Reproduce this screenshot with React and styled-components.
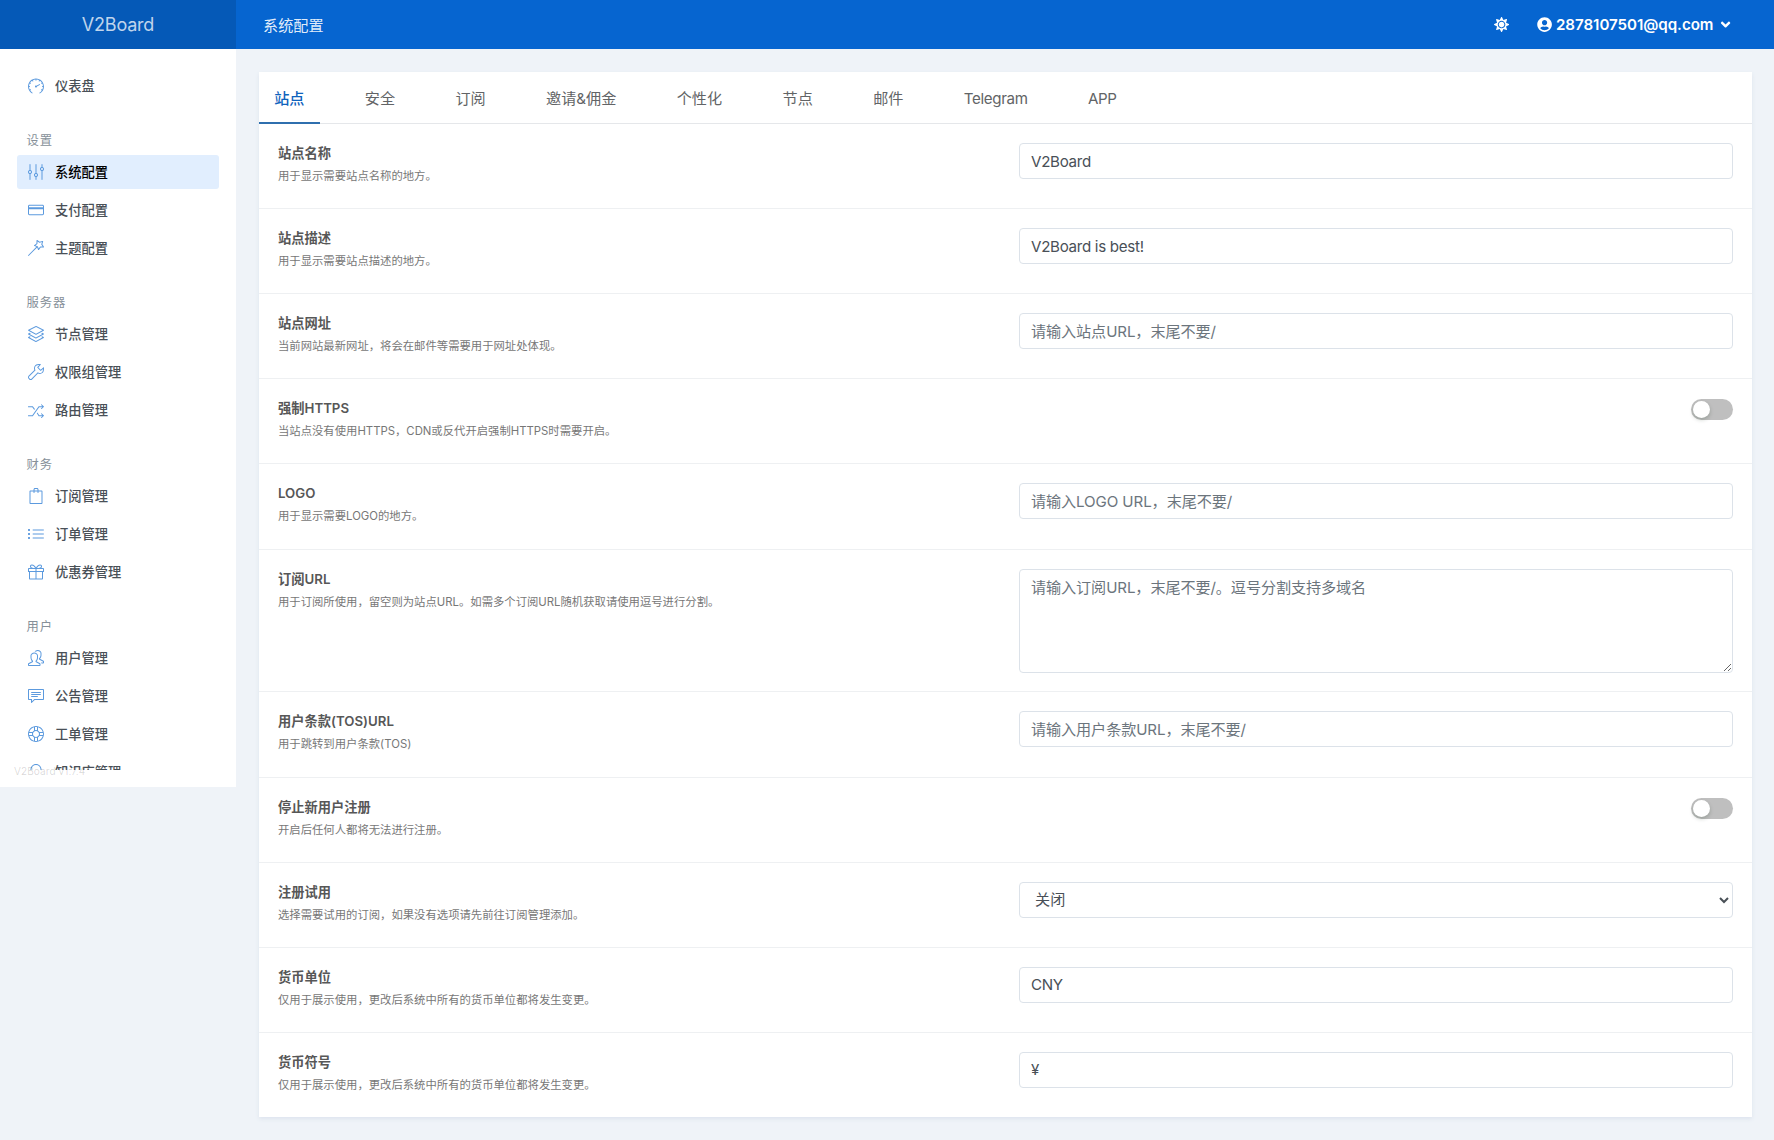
import React from "react";
import styled, { createGlobalStyle } from "styled-components";
import {
  SlSpeedometer,
  SlEqualizer,
  SlCreditCard,
  SlMagicWand,
  SlLayers,
  SlWrench,
  SlShuffle,
  SlBag,
  SlList,
  SlPresent,
  SlPeople,
  SlSpeech,
  SlSupport,
  SlBulb,
} from "react-icons/sl";
import { FaUserCircle, FaAngleDown, FaSun } from "react-icons/fa";

const menu = [
  { items: [{ icon: SlSpeedometer, label: "仪表盘" }] },
  {
    title: "设置",
    items: [
      { icon: SlEqualizer, label: "系统配置", active: true },
      { icon: SlCreditCard, label: "支付配置" },
      { icon: SlMagicWand, label: "主题配置" },
    ],
  },
  {
    title: "服务器",
    items: [
      { icon: SlLayers, label: "节点管理" },
      { icon: SlWrench, label: "权限组管理" },
      { icon: SlShuffle, label: "路由管理" },
    ],
  },
  {
    title: "财务",
    items: [
      { icon: SlBag, label: "订阅管理" },
      { icon: SlList, label: "订单管理" },
      { icon: SlPresent, label: "优惠券管理" },
    ],
  },
  {
    title: "用户",
    items: [
      { icon: SlPeople, label: "用户管理" },
      { icon: SlSpeech, label: "公告管理" },
      { icon: SlSupport, label: "工单管理" },
      { icon: SlBulb, label: "知识库管理" },
    ],
  },
];

const tabs = [
  { label: "站点", active: true },
  { label: "安全" },
  { label: "订阅" },
  { label: "邀请&佣金" },
  { label: "个性化" },
  { label: "节点" },
  { label: "邮件" },
  { label: "Telegram", latin: true },
  { label: "APP", latin: true },
];

const settings = [
  { title: "站点名称", desc: "用于显示需要站点名称的地方。", value: "V2Board" },
  { title: "站点描述", desc: "用于显示需要站点描述的地方。", value: "V2Board is best!" },
  {
    title: "站点网址",
    desc: "当前网站最新网址，将会在邮件等需要用于网址处体现。",
    placeholder: "请输入站点URL，末尾不要/",
  },
  {
    title: "强制HTTPS",
    desc: "当站点没有使用HTTPS，CDN或反代开启强制HTTPS时需要开启。",
    type: "switch",
  },
  { title: "LOGO", desc: "用于显示需要LOGO的地方。", placeholder: "请输入LOGO URL，末尾不要/" },
  {
    title: "订阅URL",
    desc: "用于订阅所使用，留空则为站点URL。如需多个订阅URL随机获取请使用逗号进行分割。",
    placeholder: "请输入订阅URL，末尾不要/。逗号分割支持多域名",
    type: "textarea",
  },
  {
    title: "用户条款(TOS)URL",
    desc: "用于跳转到用户条款(TOS)",
    placeholder: "请输入用户条款URL，末尾不要/",
  },
  { title: "停止新用户注册", desc: "开启后任何人都将无法进行注册。", type: "switch" },
  {
    title: "注册试用",
    desc: "选择需要试用的订阅，如果没有选项请先前往订阅管理添加。",
    value: "关闭",
    type: "select",
  },
  { title: "货币单位", desc: "仅用于展示使用，更改后系统中所有的货币单位都将发生变更。", value: "CNY" },
  { title: "货币符号", desc: "仅用于展示使用，更改后系统中所有的货币单位都将发生变更。", value: "¥" },
];

const Control = ({ item }) => {
  if (item.type === "switch") {
    return (
      <Switch type="button" role="switch" aria-checked="false">
        <SwitchKnob />
      </Switch>
    );
  }
  if (item.type === "textarea") {
    return <TextArea placeholder={item.placeholder} />;
  }
  if (item.type === "select") {
    return (
      <Select>
        <option>{item.value}</option>
      </Select>
    );
  }
  return <Input defaultValue={item.value} placeholder={item.placeholder} />;
};

const App = () => {
  return (
    <>
      <GlobalStyle />
      <Page>
        <Sidebar>
          <Brand>V2Board</Brand>
          <Menu>
            {menu.map((group, index) => (
              <MenuGroup key={index}>
                {group.title && <MenuHeading>{group.title}</MenuHeading>}
                {group.items.map(({ icon: Icon, label, active }) => (
                  <MenuItem key={label} $active={active}>
                    <Icon />
                    {label}
                  </MenuItem>
                ))}
              </MenuGroup>
            ))}
          </Menu>
          <Version>V2Board v1.7.4</Version>
        </Sidebar>

        <Main>
          <Header>
            <HeaderTitle>系统配置</HeaderTitle>
            <HeaderActions>
              <FaSun />
              <UserButton>
                <FaUserCircle />
                <UserEmail>2878107501@qq.com</UserEmail>
                <FaAngleDown />
              </UserButton>
            </HeaderActions>
          </Header>

          <Card>
            <Tabs>
              {tabs.map((tab) => (
                <Tab key={tab.label} $active={tab.active} $latin={tab.latin}>
                  {tab.label}
                </Tab>
              ))}
            </Tabs>
            {settings.map((item) => (
              <SettingRow key={item.title} $tall={item.type === "textarea"}>
                <div>
                  <SettingTitle>{item.title}</SettingTitle>
                  <SettingDesc>{item.desc}</SettingDesc>
                </div>
                <SettingControl>
                  <Control item={item} />
                </SettingControl>
              </SettingRow>
            ))}
          </Card>
        </Main>
      </Page>
    </>
  );
};

export default App;

// Styled Components
const GlobalStyle = createGlobalStyle`
  * {
    box-sizing: border-box;
  }

  body {
    margin: 0;
    background: #eff3f8;
    color: #575757;
    font-family: Inter, "Noto Sans CJK SC", sans-serif;
    font-size: 15.14px;
  }

  button, input, select, textarea {
    font-family: inherit;
  }
`;

const Page = styled.div`
  display: flex;
  align-items: flex-start;
  height: 1140px;
  overflow: hidden;
`;

const Sidebar = styled.nav`
  display: flex;
  flex-direction: column;
  flex: none;
  position: relative;
  width: 236px;
  height: 786.5px;
  background: #fff;
`;

const Brand = styled.div`
  flex: none;
  height: 49px;
  line-height: 49px;
  background: #0559b7;
  color: rgba(255, 255, 255, 0.75);
  font-size: 18px;
  letter-spacing: -0.2px;
  text-align: center;
`;

const Menu = styled.div`
  flex: none;
  height: 721px;
  overflow: hidden;
  padding: 19.5px 17px 0;
`;

const MenuGroup = styled.div`
  margin-bottom: 25.3px;
`;

const MenuHeading = styled.div`
  height: 27px;
  padding: 0 9.5px;
  line-height: 25px;
  color: #869099;
  font-size: 12.3px;
  letter-spacing: 0.9px;
`;

const MenuItem = styled.a`
  display: flex;
  align-items: center;
  gap: 11px;
  height: 34px;
  margin-bottom: 3.9px;
  padding: 0 11px;
  border-radius: 3px;
  background: ${(props) => (props.$active ? "#e1eefe" : "transparent")};
  color: ${(props) => (props.$active ? "#000" : "#495057")};
  font-size: 13.25px;
  font-weight: 500;
  line-height: 18px;

  svg {
    width: 16px;
    height: 16px;
    color: #5c9ade;
  }
`;

const Version = styled.div`
  position: absolute;
  left: 14px;
  bottom: 9px;
  color: rgba(0, 0, 0, 0.16);
  font-size: 10px;
  letter-spacing: 0.1px;
  line-height: 14px;
`;

const Main = styled.main`
  flex: 1;
  min-width: 0;
`;

const Header = styled.header`
  display: flex;
  align-items: center;
  justify-content: space-between;
  height: 49px;
  padding: 0 40.5px 0 27px;
  background: #0665d0;
  color: #fff;
`;

const HeaderTitle = styled.div`
  padding-bottom: 2px;
  color: rgba(255, 255, 255, 0.9);
`;

const HeaderActions = styled.div`
  display: flex;
  align-items: center;
  gap: 27.5px;
`;

const UserButton = styled.div`
  display: flex;
  align-items: center;
  gap: 4px;
`;

const UserEmail = styled.span`
  margin-right: 1px;
  font-weight: 600;
  letter-spacing: -0.05px;
`;

const Card = styled.section`
  margin: 23px 22px 0 23px;
  background: #fff;
  box-shadow: 0 2px 4px #dde4ee;
`;

const Tabs = styled.div`
  display: flex;
  gap: 30px;
  height: 52px;
  border-bottom: 1px solid #e5e7ea;
`;

const Tab = styled.div`
  height: 52px;
  padding: 0 15.2px;
  border-bottom: 2px solid ${(props) => (props.$active ? "#2f6fae" : "transparent")};
  color: ${(props) => (props.$active ? "#0f63bd" : "#626466")};
  font-weight: ${(props) => (props.$active ? 500 : 400)};
  letter-spacing: ${(props) => (props.$latin ? "-0.35px" : "normal")};
  line-height: 54px;
`;

const SettingRow = styled.div`
  display: flex;
  justify-content: space-between;
  height: ${(props) => (props.$tall ? "142.9px" : "85.12px")};
  padding: 19px 19px 0;
  border-bottom: 1px solid #eef0f2;

  &:last-child {
    height: 84.5px;
    border-bottom: none;
  }
`;

const SettingTitle = styled.div`
  font-size: 13.25px;
  font-weight: 600;
  line-height: 20px;
`;

const SettingDesc = styled.div`
  margin-top: 3px;
  color: #777;
  font-size: 11.35px;
  line-height: 20px;
`;

const SettingControl = styled.div`
  display: flex;
  justify-content: flex-end;
  align-items: flex-start;
  width: 714px;
`;

const Input = styled.input`
  width: 100%;
  height: 36px;
  padding: 0 11px;
  border: 1px solid #dce2e9;
  border-radius: 4px;
  outline: none;
  background: #fff;
  color: #495057;
  font-size: 15.14px;
  letter-spacing: -0.3px;

  &::placeholder {
    color: #6c757d;
    letter-spacing: -0.1px;
  }
`;

const TextArea = styled(Input).attrs({ as: "textarea" })`
  height: 104px;
  padding: 6px 11px;
  line-height: 23px;
  resize: vertical;
`;

const Select = styled(Input).attrs({ as: "select" })`
  padding: 0 0 0 11px;
  letter-spacing: normal;
`;

const Switch = styled.button`
  width: 42px;
  height: 21px;
  margin-top: 1px;
  padding: 2px;
  border: none;
  border-radius: 11px;
  background: #bfbfbf;
`;

const SwitchKnob = styled.span`
  display: block;
  width: 17px;
  height: 17px;
  border-radius: 50%;
  background: #fff;
  box-shadow: 0 2px 4px rgba(0, 35, 11, 0.2);
`;
